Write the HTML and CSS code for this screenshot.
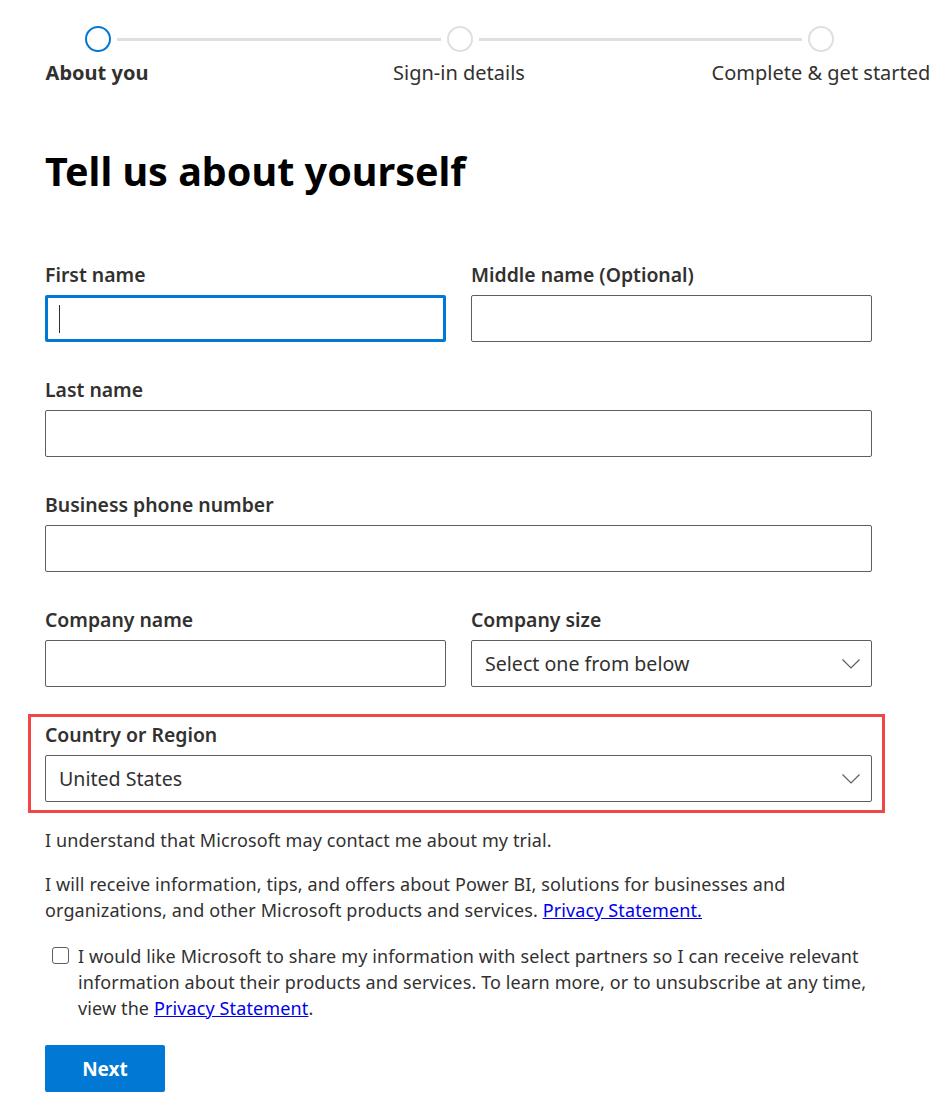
FILE: index.html
```html
<!DOCTYPE html>
<html lang="en">
<head>
<meta charset="utf-8">
<title>Tell us about yourself</title>
<link rel="stylesheet" href="styles.css">
</head>
<body>
<div class="page">
  <div class="stepper">
    <div class="track">
      <span class="dot dot-active"></span>
      <span class="line"></span>
      <span class="dot"></span>
      <span class="line"></span>
      <span class="dot"></span>
    </div>
    <div class="step-labels">
      <span class="step"><span class="step-label step-current">About you</span></span>
      <span class="step"><span class="step-label">Sign-in details</span></span>
      <span class="step"><span class="step-label">Complete &amp; get started</span></span>
    </div>
  </div>

  <h1 class="title">Tell us about yourself</h1>

  <form class="form">
    <div class="row two">
      <div class="field">
        <label class="label">First name</label>
        <div class="input input-focus"><span class="caret"></span></div>
      </div>
      <div class="field">
        <label class="label">Middle name (Optional)</label>
        <div class="input"></div>
      </div>
    </div>
    <div class="row">
      <div class="field">
        <label class="label">Last name</label>
        <div class="input"></div>
      </div>
    </div>
    <div class="row">
      <div class="field">
        <label class="label">Business phone number</label>
        <div class="input"></div>
      </div>
    </div>
    <div class="row two">
      <div class="field">
        <label class="label">Company name</label>
        <div class="input"></div>
      </div>
      <div class="field">
        <label class="label">Company size</label>
        <div class="input select">
          <span class="select-text">Select one from below</span>
          <svg class="chev" width="18" height="10" viewBox="0 0 18 10"><polyline points="0.5,0.5 9,9 17.5,0.5" fill="none" stroke="#605e5c" stroke-width="1.2"/></svg>
        </div>
      </div>
    </div>
    <div class="highlight">
      <div class="field">
        <label class="label">Country or Region</label>
        <div class="input select">
          <span class="select-text">United States</span>
          <svg class="chev" width="18" height="10" viewBox="0 0 18 10"><polyline points="0.5,0.5 9,9 17.5,0.5" fill="none" stroke="#605e5c" stroke-width="1.2"/></svg>
        </div>
      </div>
    </div>

    <p class="text t1">I understand that Microsoft may contact me about my trial.</p>
    <p class="text t2">I will receive information, tips, and offers about Power BI, solutions for businesses and organizations, and other Microsoft products and services. <a href="#" class="link">Privacy Statement.</a></p>
    <div class="check-row">
      <span class="checkbox"></span>
      <p class="text check-text">I would like Microsoft to share my information with select partners so I can receive relevant information about their products and services. To learn more, or to unsubscribe at any time, view the <a href="#" class="link">Privacy Statement</a>.</p>
    </div>
    <button type="button" class="btn">Next</button>
  </form>
</div>
</body>
</html>
```
FILE: styles.css
```css
* { box-sizing: border-box; }
html, body { margin: 0; padding: 0; background: #fff; }
body {
  font-family: "Noto Sans", "Open Sans", sans-serif;
  color: #323130;
}
.page {
  padding: 26px 16px 0 45px;
  width: 946px;
}
.stepper { width: 828px; }
.track {
  display: flex;
  align-items: center;
  padding: 0 39px 0 40px;
  height: 26px;
}
.dot {
  width: 26px;
  height: 26px;
  border-radius: 50%;
  border: 2px solid #e1dfdd;
  flex: none;
}
.dot-active { border-color: #0078d4; }
.line {
  flex: 1;
  height: 3px;
  background: #e1dfdd;
  margin: 0 6px;
}
.step-labels {
  display: flex;
  justify-content: space-between;
  margin-top: 7px;
}
.step {
  width: 104px;
  display: flex;
  justify-content: center;
}
.step-label {
  flex: none;
  white-space: nowrap;
  font-size: 20px;
  line-height: 28px;
  color: #323130;
}
.step-current { font-weight: 700; }

.title {
  margin: 56px 0 0 0;
  font-size: 39.5px;
  line-height: 56px;
  font-weight: 700;
  color: #000;
}

.form {
  width: 827px;
  margin-top: 64px;
}
.row { display: flex; gap: 25px; }
.row + .row { margin-top: 36px; }
.row.two .field { flex: 1; }
.field { flex: 1; display: flex; flex-direction: column; }
.label {
  font-size: 19.4px;
  line-height: 24px;
  font-weight: 600;
  color: #323130;
  margin-bottom: 8px;
}
.input {
  height: 47px;
  border: 1px solid #605e5c;
  border-radius: 2px;
  background: #fff;
  display: flex;
  align-items: center;
}
.input-focus {
  border: 3px solid #0078d4;
  padding-left: 11px;
}
.caret {
  width: 1px;
  height: 28px;
  background: #323130;
}
.select {
  justify-content: space-between;
  padding: 0 11px 0 13px;
}
.select-text {
  font-size: 19.6px;
  color: #323130;
}
.chev { display: block; }

.highlight {
  margin: 27px -13px 0 -17px;
  border: 3px solid #f24646;
  padding: 6px 10px 8px 14px;
}

.text {
  margin: 0;
  font-size: 18px;
  letter-spacing: 0.12px;
  line-height: 26px;
  color: #323130;
}
.t1 { margin-top: 14px; }
.t2 { margin-top: 18px; }
.link { color: #0000ee; text-decoration: underline; }
.check-row {
  display: flex;
  align-items: flex-start;
  margin-top: 20px;
}
.checkbox {
  flex: none;
  width: 17px;
  height: 17px;
  border: 1px solid #605e5c;
  border-radius: 3px;
  margin: 4px 9px 0 7px;
}
.check-text { flex: 1; }
.btn {
  display: block;
  margin-top: 24px;
  width: 120px;
  height: 47px;
  border: none;
  border-radius: 2px;
  background: #0078d4;
  color: #fff;
  font-family: inherit;
  font-size: 19px;
  font-weight: 700;
  padding: 0;
}
```
